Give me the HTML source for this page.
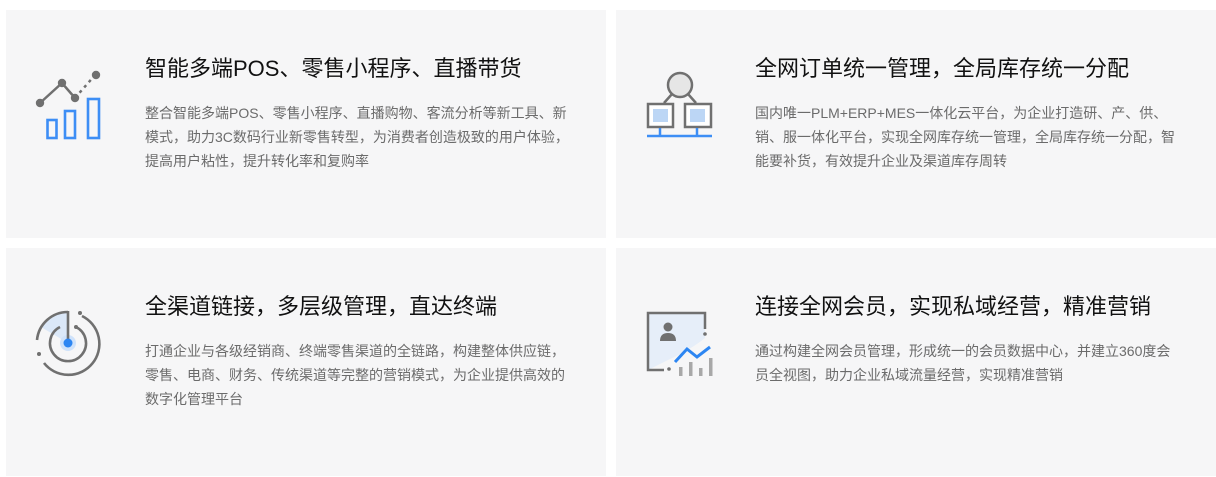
<!DOCTYPE html>
<html><head><meta charset="utf-8"><style>
*{margin:0;padding:0;box-sizing:border-box}
body{width:1216px;height:477px;background:#fff;position:relative;overflow:hidden;font-family:"Liberation Sans","Noto Sans CJK SC",sans-serif}
.card{position:absolute;width:600px;height:228px;background:#f6f6f7}
.card svg{position:absolute;left:22px;top:52px}
.t{position:absolute;left:139px;top:41px;font-size:22px;color:#111;white-space:nowrap}
.d{position:absolute;left:139px;top:91px;font-size:14px;line-height:24px;color:#6b6b6b;white-space:nowrap}
</style></head><body>
<div class="card" style="left:6px;top:10px">
<svg width="90" height="90" viewBox="0 0 90 90"><g transform="translate(-28,-62)">
<path d="M40 103 L62 83 L75 98" stroke="#707070" stroke-width="2.5" fill="none"/>
<path d="M75 98 L95 75" stroke="#707070" stroke-width="2.5" stroke-dasharray="3 4" fill="none"/>
<circle cx="40" cy="103" r="4.2" fill="#707070"/><circle cx="62" cy="83" r="4.2" fill="#707070"/><circle cx="75" cy="98" r="4.2" fill="#707070"/><circle cx="96" cy="75" r="4.2" fill="#707070"/>
<g fill="none" stroke="#3d8ef5" stroke-width="2.6"><rect x="47.5" y="120" width="9" height="18"/><rect x="65" y="111" width="10" height="27"/><rect x="88" y="99" width="11" height="39"/></g>
</g></svg>
<div class="t">智能多端POS、零售小程序、直播带货</div>
<div class="d">整合智能多端POS、零售小程序、直播购物、客流分析等新工具、新<br>模式，助力3C数码行业新零售转型，为消费者创造极致的用户体验，<br>提高用户粘性，提升转化率和复购率</div>
</div>
<div class="card" style="left:616px;top:10px">
<svg width="90" height="90" viewBox="0 0 90 90"><g transform="translate(-638,-62)">
<circle cx="680" cy="85" r="12" fill="#e6e6e6" stroke="#707070" stroke-width="2.5"/>
<path d="M672 94 L664 103 M688 94 L696 103" stroke="#707070" stroke-width="2.5"/>
<rect x="648" y="104" width="25" height="23" fill="#fff" stroke="#707070" stroke-width="2.5"/>
<rect x="685" y="104" width="26" height="23" fill="#fff" stroke="#707070" stroke-width="2.5"/>
<rect x="653" y="109" width="15" height="13" fill="#bcd6f5"/><rect x="690" y="109" width="15" height="13" fill="#bcd6f5"/>
<path d="M647 136 H712 M660 128 V136 M697 128 V136" stroke="#3d8ef5" stroke-width="2.5"/>
</g></svg>
<div class="t">全网订单统一管理，全局库存统一分配</div>
<div class="d">国内唯一PLM+ERP+MES一体化云平台，为企业打造研、产、供、<br>销、服一体化平台，实现全网库存统一管理，全局库存统一分配，智<br>能要补货，有效提升企业及渠道库存周转</div>
</div>
<div class="card" style="left:6px;top:248px">
<svg width="90" height="90" viewBox="0 0 90 90"><g transform="translate(-28,-300)">
<path d="M68 343 L68 312 A31 31 0 0 0 41 327 Z" fill="#dbe8f8"/>
<circle cx="68" cy="343" r="8" fill="#cfe2fa"/>
<path d="M68 343 V311" stroke="#707070" stroke-width="2.6"/>
<path d="M82 316 A31 31 0 1 1 44 363" stroke="#707070" stroke-width="2.6" fill="none"/>
<path d="M68 312 A31 31 0 0 0 37 340" stroke="#707070" stroke-width="2.6" fill="none"/>
<path d="M76 327 A18 18 0 1 1 60 327" stroke="#707070" stroke-width="2.6" fill="none"/>
<circle cx="80" cy="313" r="2" fill="#707070"/><circle cx="76" cy="327" r="2" fill="#707070"/><circle cx="39" cy="354" r="2" fill="#707070"/>
<circle cx="68" cy="343" r="4.5" fill="#2d86f2"/>
</g></svg>
<div class="t">全渠道链接，多层级管理，直达终端</div>
<div class="d">打通企业与各级经销商、终端零售渠道的全链路，构建整体供应链，<br>零售、电商、财务、传统渠道等完整的营销模式，为企业提供高效的<br>数字化管理平台</div>
</div>
<div class="card" style="left:616px;top:248px">
<svg width="90" height="90" viewBox="0 0 90 90"><g transform="translate(-638,-300)">
<path d="M648 313 H705 V338 Q690 350 668 360 L648 370 Z" fill="#e6eef9"/>
<path d="M705 329 V313 H648 V370 H664" stroke="#707070" stroke-width="2.5" fill="none"/>
<circle cx="705" cy="334" r="1.8" fill="#707070"/><circle cx="669" cy="369" r="1.8" fill="#707070"/>
<circle cx="668" cy="327" r="4.5" fill="#707070"/><path d="M660 341 Q660 333 668 333 Q676 333 676 341 Z" fill="#707070"/>
<g fill="#a8a8a8"><rect x="679" y="367" width="3.5" height="9"/><rect x="689" y="362" width="3.5" height="14"/><rect x="699" y="368" width="3.5" height="8"/><rect x="709" y="358" width="3.5" height="18"/></g>
<path d="M675 362 L687 349 L697 357 L710 347" stroke="#2d86f2" stroke-width="3" fill="none"/>
</g></svg>
<div class="t">连接全网会员，实现私域经营，精准营销</div>
<div class="d">通过构建全网会员管理，形成统一的会员数据中心，并建立360度会<br>员全视图，助力企业私域流量经营，实现精准营销</div>
</div>
</body></html>
